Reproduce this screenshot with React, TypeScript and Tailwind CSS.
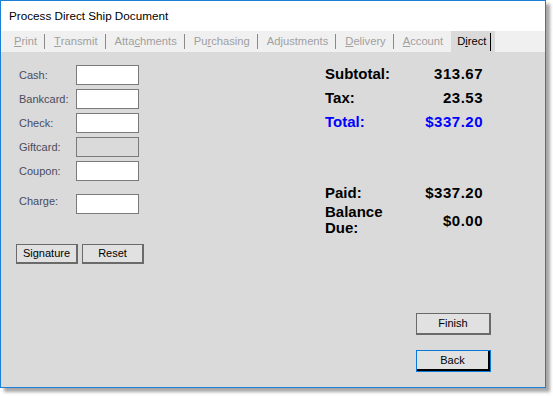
import React from "react";

const tabs: { pre: string; u: string; post: string }[] = [
  { pre: "", u: "P", post: "rint" },
  { pre: "", u: "T", post: "ransmit" },
  { pre: "Atta", u: "c", post: "hments" },
  { pre: "Pu", u: "r", post: "chasing" },
  { pre: "Ad", u: "j", post: "ustments" },
  { pre: "", u: "D", post: "elivery" },
  { pre: "", u: "A", post: "ccount" },
];

const fields: { label: string; disabled?: boolean; extra?: boolean }[] = [
  { label: "Cash:" },
  { label: "Bankcard:" },
  { label: "Check:" },
  { label: "Giftcard:", disabled: true },
  { label: "Coupon:" },
  { label: "Charge:", extra: true },
];

export default function App() {
  return (
    <div className="w-[553px] h-[396px] bg-white relative" style={{ fontFamily: '"Liberation Sans", Arial, sans-serif' }}>
      <div className="w-[546px] h-[388px] border border-[#1a80d6] flex flex-col shadow-[4px_4px_3px_rgba(0,0,0,0.35)]">
        {/* title bar */}
        <div className="h-[30px] bg-white flex items-center pl-[8px] text-[11.7px] text-black shrink-0">
          Process Direct Ship Document
        </div>
        {/* tab strip */}
        <div className="h-[21px] bg-[#f0f0f0] flex items-stretch pl-[13px] text-[11.2px] text-[#a0a0a0] shrink-0">
          {tabs.map((t, i) => (
            <React.Fragment key={i}>
              <span className="flex items-center">
                {t.pre}
                <u>{t.u}</u>
                {t.post}
              </span>
              {i < tabs.length - 1 && (
                <span className="flex items-center ml-[7px] mr-[9px]">
                  <span className="w-px h-[15px] bg-[#8a8a8a]" />
                </span>
              )}
            </React.Fragment>
          ))}
          <div className="ml-[8px] bg-[#dadada] pl-[6px] pr-[4px] flex items-center text-black">
            <span>
              D<u>i</u>rect
            </span>
            <span className="ml-[4px] w-px h-[18px] bg-black" />
          </div>
        </div>
        {/* content */}
        <div className="flex-1 bg-[#dadada] flex flex-col">
          <div className="flex">
            <div className="w-[324px] pl-[18px] pt-[13px]">
              <div className="flex flex-col gap-[4px]">
                {fields.map((f, i) => (
                  <div key={i} className={`flex items-center ${f.extra ? "mt-[9px]" : ""}`}>
                    <span className={`w-[57px] text-[11px] text-[#4b4b5c] ${f.extra ? "-mt-[5px]" : ""}`}>{f.label}</span>
                    <div
                      className={`w-[63px] h-[20px] border border-[#7a7a7a] ${f.disabled ? "bg-[#dadada]" : "bg-white"}`}
                    />
                  </div>
                ))}
              </div>
              <div className="flex gap-[4px] mt-[30px] -ml-[3px]">
                <button className="w-[62px] h-[20px] bg-[#e1e1e1] border border-[#6a6a6a] border-r-2 border-b-2 text-[11px] text-black leading-none">
                  Signature
                </button>
                <button className="w-[62px] h-[20px] bg-[#e1e1e1] border border-[#6a6a6a] border-r-2 border-b-2 text-[11px] text-black leading-none">
                  Reset
                </button>
              </div>
            </div>
            <div className="pt-[13px] text-[15px] font-bold text-black leading-[17px]">
              <div className="grid grid-cols-[100px_58px] gap-y-[7px]">
                <span>Subtotal:</span>
                <span className="text-right tracking-[0.5px]">313.67</span>
                <span>Tax:</span>
                <span className="text-right tracking-[0.5px]">23.53</span>
                <span className="text-[#0000ff]">Total:</span>
                <span className="text-right text-[#0000ff] tracking-[0.5px]">$337.20</span>
              </div>
              <div className="grid grid-cols-[100px_58px] gap-y-[3px] mt-[54px]">
                <span>Paid:</span>
                <span className="text-right tracking-[0.5px]">$337.20</span>
                <span className="leading-[16px]">
                  Balance
                  <br />
                  Due:
                </span>
                <span className="text-right self-center tracking-[0.5px]">$0.00</span>
              </div>
            </div>
          </div>
          <div className="mt-auto flex flex-col items-end pr-[54px] pb-[15px] gap-[15px]">
            <button className="w-[75px] h-[22px] bg-[#e1e1e1] border border-[#6a6a6a] border-r-2 border-b-2 text-[11px] text-black leading-none">
              Finish
            </button>
            <button className="w-[75px] h-[22px] bg-[#e1e1e1] border border-[#0a78d7] text-[11px] text-black leading-none p-0">
              <span className="block w-full h-full border-r-2 border-b-[2px] border-black flex items-center justify-center">Back</span>
            </button>
          </div>
        </div>
      </div>
    </div>
  );
}
